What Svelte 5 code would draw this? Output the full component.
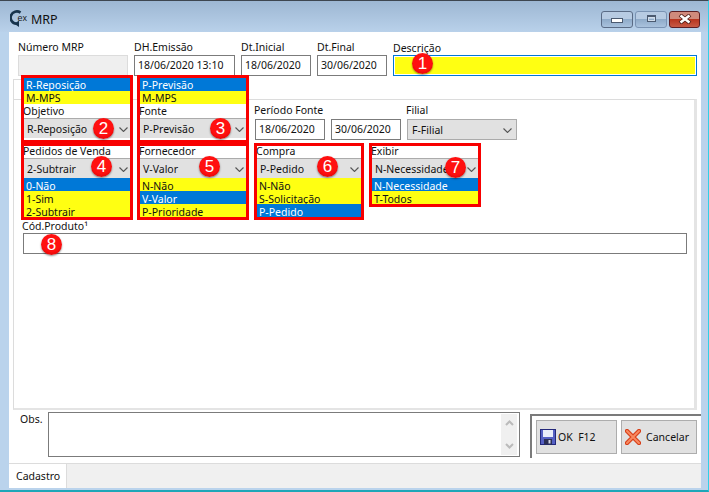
<script>
  const leftBlocks = [
    {
      label: 'Pedidos de Venda', value: '2-Subtrair', badge: 4, below: true,
      options: [{ t: '0-Não', on: true }, { t: '1-Sim' }, { t: '2-Subtrair' }]
    },
    {
      label: 'Fornecedor', value: 'V-Valor', badge: 5, below: true,
      options: [{ t: 'N-Não' }, { t: 'V-Valor', on: true }, { t: 'P-Prioridade' }]
    },
    {
      label: 'Compra', value: 'P-Pedido', badge: 6, below: true,
      options: [{ t: 'N-Não' }, { t: 'S-Solicitação' }, { t: 'P-Pedido', on: true }]
    },
    {
      label: 'Exibir', value: 'N-Necessidade', badge: 7, below: true,
      options: [{ t: 'N-Necessidade', on: true }, { t: 'T-Todos' }]
    }
  ];

  const topBlocks = [
    {
      label: 'Objetivo', value: 'R-Reposição', badge: 2,
      options: [{ t: 'R-Reposição', on: true }, { t: 'M-MPS' }]
    },
    {
      label: 'Fonte', value: 'P-Previsão', badge: 3,
      options: [{ t: 'P-Previsão', on: true }, { t: 'M-MPS' }]
    }
  ];
</script>

{#snippet chevron()}
  <svg class="chev" width="9" height="5" viewBox="0 0 9 5">
    <path d="M0.5 0.5 L4.5 4.5 L8.5 0.5" fill="none" stroke="#555" stroke-width="1.1" />
  </svg>
{/snippet}

{#snippet block(b)}
  <div class="redbox">
    {#if !b.below}
      <div class="opts">
        {#each b.options as o}
          <div class="opt" class:on={o.on}>{o.t}</div>
        {/each}
      </div>
    {/if}
    <div class="boxlabel">{b.label}</div>
    <div class="select inbox">
      <span>{b.value}</span>
      {@render chevron()}
      <span class="badge b{b.badge}">{b.badge}</span>
    </div>
    {#if b.below}
      <div class="opts">
        {#each b.options as o}
          <div class="opt" class:on={o.on}>{o.t}</div>
        {/each}
      </div>
    {/if}
  </div>
{/snippet}

<div class="window">
  <header class="titlebar">
    <svg class="logo" width="18" height="18" viewBox="0 0 18 18">
      <path d="M10.5 2.6 A6.2 6.2 0 1 0 6.5 13.8" fill="none" stroke="#17344d" stroke-width="2.6" />
      <path d="M4 13.5 L9 10.8 L9 17 Z" fill="#17344d" />
      <text x="7.5" y="10.5" font-size="9" font-family="Liberation Sans" fill="#1a1a1a">ex</text>
    </svg>
    <span class="title">MRP</span>
    <div class="controls">
      <div class="ctl min"><i></i></div>
      <div class="ctl max"><i></i></div>
      <div class="ctl close">
        <svg width="16" height="10" viewBox="0 0 16 10">
          <path d="M3 1 L13 9 M13 1 L3 9" stroke="#4a1a14" stroke-width="4" />
          <path d="M3.5 1.5 L12.5 8.5 M12.5 1.5 L3.5 8.5" stroke="#fff" stroke-width="2.6" />
        </svg>
      </div>
    </div>
  </header>

  <div class="client">
    <div class="head-row">
      <div class="field f-num">
        <label>Número MRP</label>
        <div class="input disabled"></div>
      </div>
      <div class="field f-dh">
        <label>DH.Emissão</label>
        <div class="input">18/06/2020 13:10</div>
      </div>
      <div class="field f-date">
        <label>Dt.Inicial</label>
        <div class="input">18/06/2020</div>
      </div>
      <div class="field f-date">
        <label>Dt.Final</label>
        <div class="input">30/06/2020</div>
      </div>
      <div class="field f-desc">
        <label>Descrição</label>
        <div class="input focus"><span class="badge b1">1</span></div>
      </div>
    </div>

    <div class="panel">
      <div class="row-top">
        {#each topBlocks as b}
          {@render block(b)}
        {/each}
        <div class="periodo">
          <div class="field">
            <label>Período Fonte</label>
            <div class="pair">
              <div class="input d70">18/06/2020</div>
              <div class="input d70">30/06/2020</div>
            </div>
          </div>
          <div class="field">
            <label>Filial</label>
            <div class="select plain">
              <span>F-Filial</span>
              {@render chevron()}
            </div>
          </div>
        </div>
      </div>

      <div class="row-mid">
        {#each leftBlocks as b}
          {@render block(b)}
        {/each}
      </div>

      <div class="field cod">
        <label>Cód.Produto¹</label>
        <div class="input wide-input"><span class="badge b8">8</span></div>
      </div>
    </div>

    <div class="bottom">
      <span class="obs-label">Obs.</span>
      <div class="obs">
        <div class="scroll">
          <svg width="9" height="6" viewBox="0 0 9 6"><path d="M1 5 L4.5 1.5 L8 5" fill="none" stroke="#bbb" stroke-width="2" /></svg>
          <svg width="9" height="6" viewBox="0 0 9 6"><path d="M1 1 L4.5 4.5 L8 1" fill="none" stroke="#bbb" stroke-width="2" /></svg>
        </div>
      </div>
      <div class="actions">
        <button class="ok">
          <svg width="16" height="16" viewBox="0 0 16 16">
            <rect x="0.5" y="0.5" width="15" height="15" fill="#5560c4" stroke="#23287a" />
            <rect x="3" y="1" width="10" height="7" fill="#e8ecfa" />
            <rect x="4" y="10" width="8" height="5.5" fill="#2b2f55" />
            <rect x="8.5" y="11" width="2" height="3.5" fill="#d5d8ea" />
          </svg>
          OK&nbsp; F12
        </button>
        <button class="cancel">
          <svg width="16" height="16" viewBox="0 0 16 16">
            <path d="M2 2 L14 14 M14 2 L2 14" stroke="#d8401a" stroke-width="4.4" stroke-linecap="round" />
            <path d="M2 2 L14 14 M14 2 L2 14" stroke="#f98a60" stroke-width="2" stroke-linecap="round" />
          </svg>
          <span>Cancelar</span>
        </button>
      </div>
    </div>

    <footer class="status">
      <div class="tab">Cadastro</div>
    </footer>
  </div>
</div>

<style>
  :global(body) {
    margin: 0;
    background: #bcd4ec;
  }

  .window {
    width: 709px;
    height: 492px;
    box-sizing: border-box;
    display: flex;
    flex-direction: column;
    border-top: 1px solid #3d4650;
    border-right: 1px solid #2fd0e8;
    border-bottom: 2px solid #1ea6b8;
    background: #bad3ec;
    padding: 0 7px 6px 9px;
    font-family: "Noto Sans", "DejaVu Sans", sans-serif;
    font-size: 10.5px;
    color: #111;
    overflow: hidden;
  }

  .titlebar {
    height: 31px;
    margin: 0 -7px 0 -9px;
    padding: 5px 8px 0 10px;
    box-sizing: border-box;
    background: linear-gradient(#9db7d3, #b9d1ea);
    display: flex;
    align-items: center;
  }

  .logo {
    margin-right: 3px;
  }

  .title {
    font-size: 12.5px;
    color: #111;
  }

  .controls {
    margin-left: auto;
    margin-right: 0;
    display: flex;
    gap: 2px;
  }

  .ctl {
    height: 17px;
    box-sizing: border-box;
    border: 1px solid #5a6b85;
    border-radius: 3px;
    display: flex;
    align-items: center;
    justify-content: center;
    background: linear-gradient(#b7cbe2 45%, #8fabc9 50%, #a9c2dd);
  }

  .min, .max {
    width: 32px;
  }

  .max {
    border-color: #7a93b3;
  }

  .min i {
    width: 10px;
    height: 3px;
    margin-top: 3px;
    background: #fff;
    border: 1px solid #4b5a70;
  }

  .max i {
    width: 7px;
    height: 4px;
    margin-top: -2px;
    border: 1px solid #4b5a70;
    border-top-width: 2px;
    box-shadow: inset 0 0 0 1px #d0dcea;
  }

  .close {
    width: 31px;
    border-color: #5d1f24;
    background: linear-gradient(#d08a7c 45%, #b8351f 50%, #c75a45);
  }

  .client {
    flex: 1;
    background: #fff;
    display: flex;
    flex-direction: column;
    min-height: 0;
  }

  label {
    display: block;
    line-height: 13px;
  }

  .head-row {
    display: flex;
    gap: 6px;
    padding: 9px 4px 0 9px;
    height: 67px;
    flex: none;
    box-sizing: border-box;
  }

  .f-num { width: 110px; }
  .f-dh { width: 101px; }
  .f-date { width: 70px; }
  .f-desc { flex: 1; margin-top: 1px; }

  .field label {
    margin-bottom: 1px;
  }

  .input {
    height: 21px;
    box-sizing: border-box;
    border: 1px solid #7b7b7b;
    background: #fff;
    line-height: 19px;
    padding-left: 3px;
    position: relative;
    white-space: nowrap;
  }

  .disabled {
    background: #efefef;
    border: 1px solid #dcdcdc;
  }

  .focus {
    background: #ffff12;
    border: 1px solid #0078d7;
    box-shadow: inset 0 0 0 1px #fff;
    margin-top: -1px;
  }

  .panel {
    margin: 0 4px;
    height: 311px;
    flex: none;
    box-sizing: border-box;
    border: 1px solid #dcdcdc;
    border-right: 3px solid #e4e4e4;
    border-bottom: 2px solid #e4e4e4;
    padding-left: 7px;
    position: relative;
  }

  /* stub of the tab outline, the red boxes cover the rest of it */
  .panel::before {
    content: "";
    position: absolute;
    left: -1px;
    top: -21px;
    width: 9px;
    height: 20px;
    border-left: 1px solid #dcdcdc;
    border-top: 1px solid #dcdcdc;
  }

  .row-top {
    display: flex;
    gap: 4px;
    margin-top: -25px;
    height: 68px;
    position: relative;
  }

  .row-mid {
    display: flex;
    gap: 4px;
    align-items: flex-start;
    height: 76px;
  }

  .redbox {
    width: 112px;
    box-sizing: border-box;
    border: 3px solid #f80000;
    background: #fff;
    flex: none;
  }

  .row-mid .redbox:nth-child(3) {
    margin-left: 1px;
    width: 110px;
  }

  .row-mid .redbox:nth-child(4) {
    margin-left: 1px;
  }

  .opts {
    display: flex;
    flex-direction: column;
  }

  .opt {
    height: 13px;
    line-height: 14px;
    background: #ffff12;
    padding-left: 2px;
    white-space: nowrap;
  }

  .row-mid .opt {
    line-height: 16px;
  }

  .opt.on {
    background: #0078d7;
    color: #fff;
  }

  .boxlabel {
    height: 14px;
    line-height: 14px;
    margin-left: -1px;
    position: relative;
  }

  .row-mid .boxlabel {
    height: 12px;
    line-height: 11px;
  }

  .select {
    height: 21px;
    box-sizing: border-box;
    background: #e1e1e1;
    display: flex;
    align-items: center;
    padding-left: 3px;
    position: relative;
    white-space: nowrap;
  }

  .select.inbox {
    height: 20px;
    border-top: 1px solid #ababab;
    padding-left: 3px;
  }

  .select.plain {
    width: 110px;
    border: 1px solid #ababab;
    padding-left: 4px;
  }

  .chev {
    position: absolute;
    right: 2px;
    top: 8px;
  }

  .select.plain .chev {
    right: 4px;
  }

  .periodo {
    display: flex;
    gap: 6px;
    margin-top: 29px;
    margin-left: 2px;
  }

  .periodo label {
    margin-bottom: 2px;
    margin-left: -1px;
  }

  .pair {
    display: flex;
    gap: 6px;
  }

  .d70 {
    width: 70px;
  }

  .cod {
    margin-top: 1px;
    width: 666px;
  }

  .cod label {
    line-height: 12px;
    margin-left: 1px;
  }

  .wide-input {
    margin-left: 2px;
  }

  .bottom {
    height: 53px;
    flex: none;
    box-sizing: border-box;
    display: flex;
    padding-top: 2px;
  }

  .obs-label {
    width: 39px;
    box-sizing: border-box;
    padding-left: 11px;
    line-height: 14px;
    flex: none;
  }

  .obs {
    width: 472px;
    height: 45px;
    box-sizing: border-box;
    border: 1px solid #7b7b7b;
    background: #fff;
    position: relative;
    flex: none;
  }

  .scroll {
    position: absolute;
    right: 2px;
    top: 1px;
    bottom: 1px;
    width: 16px;
    background: #f0f0f0;
    display: flex;
    flex-direction: column;
    justify-content: space-between;
    align-items: center;
    padding: 6px 0;
    box-sizing: border-box;
  }

  .actions {
    margin: 2px 0 0 10px;
    width: 171px;
    height: 44px;
    box-sizing: border-box;
    border-left: 2px solid #7b7b7b;
    border-top: 2px solid #7b7b7b;
    padding: 4px 4px 0;
    display: flex;
    gap: 4px;
    flex: none;
    background: #fff;
  }

  button {
    height: 34px;
    box-sizing: border-box;
    background: #e1e1e1;
    border: 1px solid #adadad;
    display: flex;
    align-items: center;
    padding: 0 3px;
    font: inherit;
    color: #111;
  }

  .ok {
    width: 81px;
    gap: 2px;
    padding-left: 3px;
  }

  .cancel {
    width: 76px;
    justify-content: space-between;
    padding: 0 7px 0 3px;
  }

  .status {
    flex: 1;
    border-top: 1px solid #dcdcdc;
    background: #f0f0f0;
    display: flex;
  }

  .tab {
    width: 58px;
    background: #fff;
    border-right: 1px solid #dcdcdc;
    box-sizing: border-box;
    padding-left: 7px;
    line-height: 24px;
  }

  .badge {
    position: absolute;
    width: 21px;
    height: 21px;
    border-radius: 50%;
    background: radial-gradient(circle at 50% 40%, #ff1010 55%, #c80000);
    box-shadow: 0 1px 2px rgba(0, 0, 0, 0.45);
    color: #fff;
    font-family: "Liberation Sans", sans-serif;
    font-size: 17px;
    line-height: 21px;
    text-align: center;
  }

  .b1 { left: 18px; top: -3px; }
  .b2 { left: 69px; top: -1px; }
  .b3 { left: 70px; top: -1px; }
  .b4 { left: 67px; top: -3px; }
  .b5 { left: 59px; top: -3px; }
  .b6 { left: 60px; top: -3px; }
  .b7 { left: 73px; top: -2px; }
  .b8 { left: 17px; top: 0; }
</style>
